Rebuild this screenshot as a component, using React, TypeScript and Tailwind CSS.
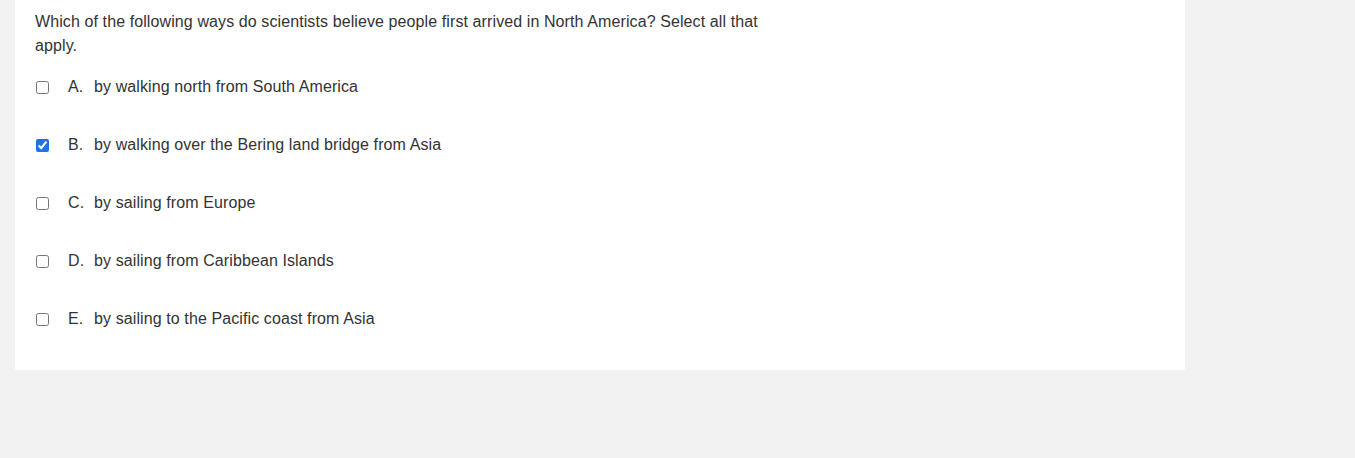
import React from 'react'

const options = [
  { letter: 'A.', text: 'by walking north from South America', checked: false },
  { letter: 'B.', text: 'by walking over the Bering land bridge from Asia', checked: true },
  { letter: 'C.', text: 'by sailing from Europe', checked: false },
  { letter: 'D.', text: 'by sailing from Caribbean Islands', checked: false },
  { letter: 'E.', text: 'by sailing to the Pacific coast from Asia', checked: false },
]

export default function App() {
  return (
    <div
      className="min-h-[458px] w-full bg-[#f2f2f2] text-[#333333] tracking-[0.1px]"
      style={{ fontFamily: '"Liberation Sans", Arial, sans-serif' }}
    >
      <div className="ml-[15px] w-[1170px] bg-white px-5 pt-[10px] pb-[22px]">
        {/* Question */}
        <p className="w-[740px] text-base leading-6">
          Which of the following ways do scientists believe people first arrived in North America? Select all that apply.
        </p>

        {/* Options */}
        <ul>
          {options.map((o) => (
            <li key={o.letter} className="flex h-[58px] items-center">
              <input
                type="checkbox"
                defaultChecked={o.checked}
                className="m-0 ml-px h-[13px] w-[13px] accent-[#1a73e8]"
              />
              <span className="ml-[19px] w-[26px] text-base leading-6">{o.letter}</span>
              <span className="text-base leading-6">{o.text}</span>
            </li>
          ))}
        </ul>
      </div>
    </div>
  )
}
